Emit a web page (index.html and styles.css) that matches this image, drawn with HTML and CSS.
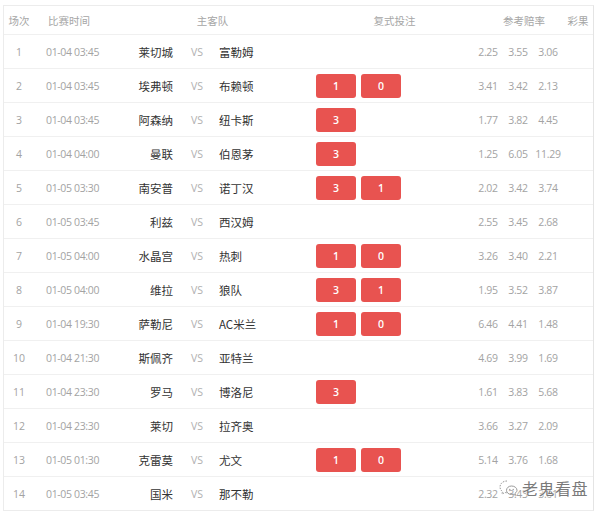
FILE: index.html
```html
<!DOCTYPE html>
<html>
<head>
<meta charset="utf-8">
<link rel="stylesheet" href="styles.css">
</head>
<body>
<div class="page">
  <div class="tbl">
    <div class="row head">
      <div class="c-no">场次</div>
      <div class="c-time">比赛时间</div>
      <div class="c-teams-h">主客队</div>
      <div class="c-bet-h">复式投注</div>
      <div class="c-odds-h">参考赔率</div>
      <div class="c-res">彩果</div>
    </div>
    <div class="row"><div class="c-no">1</div><div class="c-time">01-04 03:45</div><div class="c-home">莱切城</div><div class="c-vs">VS</div><div class="c-away">富勒姆</div><div class="c-bet"></div><div class="c-odds"><span>2.25</span><span>3.55</span><span>3.06</span></div><div class="c-res"></div></div>
    <div class="row"><div class="c-no">2</div><div class="c-time">01-04 03:45</div><div class="c-home">埃弗顿</div><div class="c-vs">VS</div><div class="c-away">布赖顿</div><div class="c-bet"><span class="btn">1</span><span class="btn">0</span></div><div class="c-odds"><span>3.41</span><span>3.42</span><span>2.13</span></div><div class="c-res"></div></div>
    <div class="row"><div class="c-no">3</div><div class="c-time">01-04 03:45</div><div class="c-home">阿森纳</div><div class="c-vs">VS</div><div class="c-away">纽卡斯</div><div class="c-bet"><span class="btn">3</span></div><div class="c-odds"><span>1.77</span><span>3.82</span><span>4.45</span></div><div class="c-res"></div></div>
    <div class="row"><div class="c-no">4</div><div class="c-time">01-04 04:00</div><div class="c-home">曼联</div><div class="c-vs">VS</div><div class="c-away">伯恩茅</div><div class="c-bet"><span class="btn">3</span></div><div class="c-odds"><span>1.25</span><span>6.05</span><span>11.29</span></div><div class="c-res"></div></div>
    <div class="row"><div class="c-no">5</div><div class="c-time">01-05 03:30</div><div class="c-home">南安普</div><div class="c-vs">VS</div><div class="c-away">诺丁汉</div><div class="c-bet"><span class="btn">3</span><span class="btn">1</span></div><div class="c-odds"><span>2.02</span><span>3.42</span><span>3.74</span></div><div class="c-res"></div></div>
    <div class="row"><div class="c-no">6</div><div class="c-time">01-05 03:45</div><div class="c-home">利兹</div><div class="c-vs">VS</div><div class="c-away">西汉姆</div><div class="c-bet"></div><div class="c-odds"><span>2.55</span><span>3.45</span><span>2.68</span></div><div class="c-res"></div></div>
    <div class="row"><div class="c-no">7</div><div class="c-time">01-05 04:00</div><div class="c-home">水晶宫</div><div class="c-vs">VS</div><div class="c-away">热刺</div><div class="c-bet"><span class="btn">1</span><span class="btn">0</span></div><div class="c-odds"><span>3.26</span><span>3.40</span><span>2.21</span></div><div class="c-res"></div></div>
    <div class="row"><div class="c-no">8</div><div class="c-time">01-05 04:00</div><div class="c-home">维拉</div><div class="c-vs">VS</div><div class="c-away">狼队</div><div class="c-bet"><span class="btn">3</span><span class="btn">1</span></div><div class="c-odds"><span>1.95</span><span>3.52</span><span>3.87</span></div><div class="c-res"></div></div>
    <div class="row"><div class="c-no">9</div><div class="c-time">01-04 19:30</div><div class="c-home">萨勒尼</div><div class="c-vs">VS</div><div class="c-away">AC米兰</div><div class="c-bet"><span class="btn">1</span><span class="btn">0</span></div><div class="c-odds"><span>6.46</span><span>4.41</span><span>1.48</span></div><div class="c-res"></div></div>
    <div class="row"><div class="c-no">10</div><div class="c-time">01-04 21:30</div><div class="c-home">斯佩齐</div><div class="c-vs">VS</div><div class="c-away">亚特兰</div><div class="c-bet"></div><div class="c-odds"><span>4.69</span><span>3.99</span><span>1.69</span></div><div class="c-res"></div></div>
    <div class="row"><div class="c-no">11</div><div class="c-time">01-04 23:30</div><div class="c-home">罗马</div><div class="c-vs">VS</div><div class="c-away">博洛尼</div><div class="c-bet"><span class="btn">3</span></div><div class="c-odds"><span>1.61</span><span>3.83</span><span>5.68</span></div><div class="c-res"></div></div>
    <div class="row"><div class="c-no">12</div><div class="c-time">01-04 23:30</div><div class="c-home">莱切</div><div class="c-vs">VS</div><div class="c-away">拉齐奥</div><div class="c-bet"></div><div class="c-odds"><span>3.66</span><span>3.27</span><span>2.09</span></div><div class="c-res"></div></div>
    <div class="row"><div class="c-no">13</div><div class="c-time">01-05 01:30</div><div class="c-home">克雷莫</div><div class="c-vs">VS</div><div class="c-away">尤文</div><div class="c-bet"><span class="btn">1</span><span class="btn">0</span></div><div class="c-odds"><span>5.14</span><span>3.76</span><span>1.68</span></div><div class="c-res"></div></div>
    <div class="row last"><div class="c-no">14</div><div class="c-time">01-05 03:45</div><div class="c-home">国米</div><div class="c-vs">VS</div><div class="c-away">那不勒</div><div class="c-bet"></div><div class="c-odds"><span>2.32</span><span>3.43</span><span>3.01</span></div><div class="c-res"></div></div>
  </div>
  <div class="watermark">
    <svg class="wm-icon" width="20" height="18" viewBox="0 0 20 18">
      <path d="M8 2 C3.5 2 1 5 1 8 C1 10 2 11.5 3.5 12.5 L3 15 L6 13.5 C6.8 13.7 7.4 13.8 8 13.8" fill="none" stroke="#999" stroke-width="1" stroke-dasharray="1.5 1.2"/>
      <path d="M12.5 7 C9.5 7 7.5 9 7.5 11.3 C7.5 13.6 9.5 15.5 12.5 15.5 C13.2 15.5 13.7 15.4 14.2 15.2 L16.5 16.3 L16 14.3 C17.2 13.5 18 12.5 18 11.3 C18 9 15.7 7 12.5 7 Z" fill="none" stroke="#999" stroke-width="1"/>
      <circle cx="10.8" cy="10.5" r="0.7" fill="#999"/>
      <circle cx="14.2" cy="10.5" r="0.7" fill="#999"/>
    </svg>
    <span class="wm-text">老鬼看盘</span>
  </div>
</div>
</body>
</html>
```

FILE: styles.css
```css
html, body {
  margin: 0;
  padding: 0;
  background: #fff;
}
.page {
  position: relative;
  width: 600px;
  height: 512px;
  padding: 5px 0 0 3px;
  box-sizing: border-box;
  font-family: "Noto Sans CJK SC", "Noto Sans", sans-serif;
}
.tbl {
  width: 591px;
  border: 1px solid #ececec;
  border-right-color: #e4e4e4;
  box-sizing: border-box;
}
.row {
  display: grid;
  grid-template-columns: 30px 85px 54px 46px 87px 167px 90px 1fr;
  align-items: center;
  height: 34px;
  border-top: 1px solid #f0f0f0;
  box-sizing: border-box;
  font-size: 10.5px;
  color: #a3a3a3;
}
.row.head {
  height: 28px;
  border-top: none;
  grid-template-columns: 30px 85px 187px 167px 90px 1fr;
  font-size: 10.5px;
  color: #a6a6a6;
}
.c-no {
  text-align: center;
  font-family: "Open Sans", "Noto Sans CJK SC", sans-serif;
}
.head .c-no { font-family: "Noto Sans CJK SC", sans-serif; }
.c-time {
  padding-left: 12px;
  font-family: "Open Sans", sans-serif;
  letter-spacing: -0.35px;
}
.head .c-time { font-family: "Noto Sans CJK SC", sans-serif; letter-spacing: 0; padding-left: 14px; }
.c-teams-h {
  text-align: center;
  padding-left: 0;
}
.c-bet-h {
  text-align: center;
  padding-left: 10px;
}
.c-odds-h {
  text-align: center;
  padding-left: 12px;
}
.c-home {
  text-align: right;
  color: #333;
  font-size: 11.5px;
}
.c-vs {
  text-align: center;
  padding-left: 2px;
  font-family: "Open Sans", sans-serif;
  color: #b0b0b0;
}
.c-away {
  color: #333;
  font-size: 11.5px;
}
.c-bet {
  display: flex;
  gap: 5px;
  padding-left: 10px;
}
.btn {
  width: 40px;
  height: 24px;
  border-radius: 3px;
  background: #e85350;
  color: #fff;
  display: flex;
  align-items: center;
  justify-content: center;
  font-family: "Open Sans", sans-serif;
  font-size: 10.5px;
  font-weight: 600;
}
.c-odds {
  display: flex;
  font-family: "Open Sans", sans-serif;
  letter-spacing: -0.3px;
}
.c-odds span {
  width: 30px;
  text-align: center;
}
.c-res {
  text-align: center;
}
.watermark {
  position: absolute;
  left: 499px;
  top: 476px;
  display: flex;
  align-items: center;
  gap: 3px;
}
.wm-text {
  font-size: 16px;
  color: #7a7a7a;
  letter-spacing: 0.5px;
  text-shadow: 0 0 2px #fff, 0 0 2px #fff;
}
```
